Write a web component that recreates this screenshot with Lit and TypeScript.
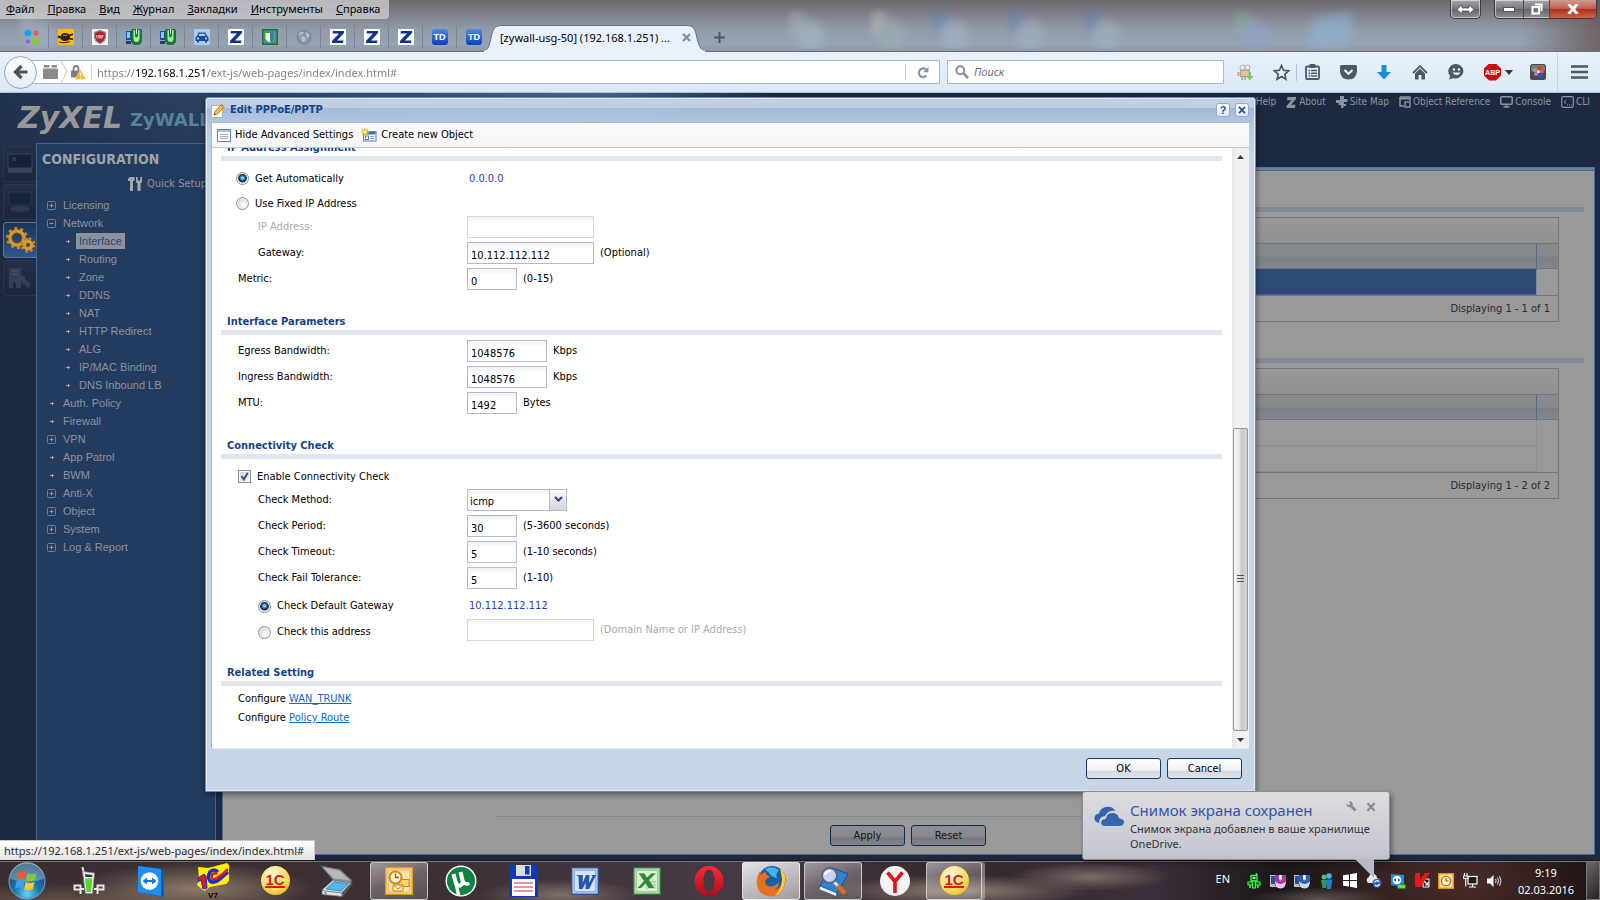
import { LitElement, html, css, svg, nothing, TemplateResult } from "lit";
import { customElement } from "lit/decorators.js";

type Pic = TemplateResult;

const pic = (w: number, h: number, vb: string, body: unknown): Pic =>
  html`<svg width=${w} height=${h} viewBox=${vb} aria-hidden="true">${body}</svg>`;

/* ---------- favicons ---------- */
const favDots = pic(16, 16, "0 0 16 16", svg`
  <circle cx="4" cy="4" r="3.6" fill="#19a5f0"/><circle cx="12" cy="4" r="2.7" fill="#f2566b"/>
  <circle cx="4" cy="12.4" r="2.2" fill="#9a5fe0"/><circle cx="11.5" cy="11.8" r="4.2" fill="#84c93c"/>`);
const favPlug = pic(16, 16, "0 0 16 16", svg`
  <rect width="16" height="16" fill="#fdb813"/><path d="M0 6.500 L3 7 Q3 4 7 4 Q10 4 11 5.500 L15 4.500 V6 L12 7 V9 L15 9.500 V11 L11 10.500 Q9 12.500 6 12 Q3 11.500 3 9.500 L0 9Z" fill="#2b2210"/>
  <path d="M1 13 Q6 14.500 12 12.500" stroke="#4a3606" stroke-width="1.2" fill="none"/><path d="M5 6.500 L9 6.500" stroke="#b98a16" stroke-width="1"/>`);
const favShield = pic(16, 16, "0 0 16 16", svg`
  <rect width="16" height="16" fill="#f6f4f4"/><path d="M8 1.500 L13.500 3.500 V8 Q13 12.500 8 14.500 Q3 12.500 2.500 8 V3.500Z" fill="#b5232c" stroke="#8d8f94" stroke-width="1.200"/>
  <path d="M4.800 6 V8.500 Q5.500 10 6.300 8.500 V6 M7.200 9.500 L8 6 L8.900 9.500 M9.800 9.500 V6.300 H11 V8 H10" stroke="#f3d9da" stroke-width=".8" fill="none"/>`);
const favMouse = pic(16, 16, "0 0 16 16", svg`
  <rect x="0" y="2" width="6" height="9" fill="#1c4fae"/><rect x="1" y="3" width="3" height="6" fill="#8fc3f5"/><rect x="0" y="12" width="5" height="3" fill="#2c3c62"/>
  <path d="M5 3 Q5 0 8 0 H13 Q16 0 16 3 V9 Q16 16 10.5 16 Q5 16 5 9Z" fill="#14802a" stroke="#0b5a1b" stroke-width=".6"/><path d="M7.500 1 V9 Q7.500 13 10.500 13 Q13.500 13 13.500 9 V1 L12 1 V7 Q10.500 10 9 7 V1Z" fill="#a4e8a8"/><path d="M10.500 0 V5" stroke="#eafbea" stroke-width="1"/>`);
const favCar = pic(16, 16, "0 0 16 16", svg`
  <rect width="16" height="16" fill="#a8cdf3"/><path d="M4.500 3.500 H11.500 L13 7 Q14.500 7.500 14.500 9 V12 H13 V13.500 H11 V12 H5 V13.500 H3 V12 H1.500 V9 Q1.500 7.500 3 7Z" fill="#1a4c96"/>
  <path d="M5.300 4.800 H10.700 L11.500 7 H4.500Z" fill="#a8cdf3"/><circle cx="4" cy="9.500" r=".9" fill="#fff"/><circle cx="12" cy="9.500" r=".9" fill="#fff"/>`);
const favZ = pic(16, 16, "0 0 16 16", svg`
  <rect width="16" height="16" fill="#fff"/><path d="M3 2 H14 V4 L7 11.500 H13.500 L13 14 H2 V12 L9 4.600 H2.500Z" fill="#14308a"/>`);
const favGreen = pic(16, 16, "0 0 16 16", svg`
  <rect x=".7" y=".7" width="14.600" height="14.600" fill="#3f9a68" stroke="#1f6b42" stroke-width="1.400"/><path d="M3.500 4 H12.500 V9 Q12 12 8 13.500 Q4 12 3.500 9Z" fill="#f4f3c8"/>
  <path d="M8 4 H12.500 V9 Q12 12 8 13.500Z" fill="#3a7fb0"/>`);
const favGlobe = pic(16, 16, "0 0 16 16", svg`
  <circle cx="8" cy="8" r="6.800" fill="#8f959f" stroke="#747c87" stroke-width="1"/><path d="M3 4 Q6 2 8 3 L7 5 L4 6 L3 8Z M6 7 L9 8 L10 10 L8 14 L6 12 L5 9Z M10 3 L13 5 L13.500 8 L11 9 L10 6Z" fill="#b9bfc8"/>`);
const favTD = html`<span class="td">TD</span>`;

/* ---------- browser toolbar ---------- */
const dark = "#4d5861";
const icBack = pic(16, 16, "0 0 16 16", svg`<path d="M8.500 2 L2.500 8 L8.500 14 M3 8 H14.500" stroke="#4a5259" stroke-width="3.200" fill="none"/>`);
const icPuzzle = pic(15, 14, "0 0 15 14", svg`<rect y="3.500" width="15" height="10.500" rx="1" fill="#8a8a8a"/><rect x="1" y="0" width="5.500" height="2.500" fill="#8a8a8a"/><rect x="8.500" y="0" width="5.500" height="2.500" fill="#8a8a8a"/>`);
const icLock = pic(15, 15, "0 0 15 15", svg`
  <path d="M2.500 6 V4 Q2.500 1 5 1 Q7.500 1 7.500 4 V6" stroke="#7d7d7d" stroke-width="1.800" fill="none"/><rect x="0" y="5.500" width="9.500" height="7" rx="1" fill="#7d7d7d"/>
  <path d="M9.500 4.500 L15 14.500 H4Z" fill="#fdb515" stroke="#fff" stroke-width=".5"/><path d="M9.500 8 V11 M9.500 12 V13.200" stroke="#fff" stroke-width="1.300"/>`);
const icReload = pic(12, 13, "0 0 12 13", svg`<path d="M9.500 9.500 A4.300 4.300 0 1 1 9 3.500" stroke="#8496a8" stroke-width="2.200" fill="none"/><path d="M11.500 .8 V6.300 H6Z" fill="#8496a8"/>`);
const icMag = pic(14, 14, "0 0 14 14", svg`<circle cx="5.300" cy="5.300" r="4" stroke="#8d8d8d" stroke-width="1.900" fill="none"/><path d="M8.200 8.200 L13 13" stroke="#8d8d8d" stroke-width="2.500"/>`);
const icRobot = pic(17, 17, "0 0 17 17", svg`
  <circle cx="5.500" cy="3.500" r="2.500" fill="#eee" stroke="#a9a9a9"/><circle cx="10.500" cy="3.500" r="2.500" fill="#eee" stroke="#a9a9a9"/><rect x="3.500" y="6.500" width="9" height="6" fill="#ecc28c" stroke="#b5a48c"/>
  <path d="M1.500 8 V12 M5 13 V16 M8 13 V16" stroke="#a9a9a9" stroke-width="1.800"/><path d="M11.500 8 V12 H9 L12.800 16.500 L16.500 12 H14 V8Z" fill="#75c86c"/>`);
const icStar = pic(17, 17, "0 0 17 17", svg`<path d="M8.500 1.600 L10.600 6.300 L15.600 6.800 L11.800 10.200 L12.900 15.200 L8.500 12.600 L4.100 15.200 L5.200 10.200 L1.400 6.800 L6.400 6.300Z" fill="none" stroke="${dark}" stroke-width="1.700"/>`);
const icList = pic(15, 16, "0 0 15 16", svg`<rect x="1" y="2.500" width="13" height="12.500" rx="1" fill="none" stroke="${dark}" stroke-width="1.800"/><rect x="4.500" y="0" width="6" height="4" rx="1" fill="${dark}"/>
  <path d="M3.500 6.500 H5 M6 6.500 H12 M3.500 9.300 H5 M6 9.300 H12 M3.500 12.100 H5 M6 12.100 H12" stroke="${dark}" stroke-width="1.500"/>`);
const icPocket = pic(17, 15, "0 0 17 15", svg`<path d="M1.500 0 H15.500 Q17 0 17 1.500 V6.500 Q16 14.500 8.500 14.500 Q1 14.500 0 6.500 V1.500 Q0 0 1.500 0Z" fill="${dark}"/><path d="M4.500 5 L8.500 8.800 L12.500 5" stroke="#eef4fb" stroke-width="2" fill="none"/>`);
const icDown = pic(14, 15, "0 0 14 15", svg`<path d="M4.500 0 H9.500 V7 H14 L7 14.500 L0 7 H4.500Z" fill="#1c8fd8"/>`);
const icHome = pic(16, 15, "0 0 16 15", svg`<path d="M1 8 L8 1.200 L15 8" stroke="${dark}" stroke-width="1.800" fill="none"/><path d="M3 8.500 L8 3.700 L13 8.500 V14.500 H9.500 V10 H6.500 V14.500 H3Z" fill="${dark}"/>`);
const icChat = pic(17, 16, "0 0 17 16", svg`<path d="M8.500 0 A8 7.300 0 1 1 5 14.200 L1.200 15.500 L2 11.800 A8 7.300 0 0 1 8.500 0Z" fill="${dark}"/><circle cx="6" cy="5.500" r="1.200" fill="#eef4fb"/><circle cx="11" cy="5.500" r="1.200" fill="#eef4fb"/><path d="M4.500 8.500 Q8.500 13.500 12.500 8.500Z" fill="#eef4fb"/>`);
const icFlower = pic(16, 16, "0 0 16 16", svg`<rect width="16" height="16" rx="2.500" fill="#4a4a4e"/><rect x="1" y="1" width="14" height="7" rx="2" fill="#77777c"/><circle cx="9.500" cy="4" r="2" fill="#e8352c"/><circle cx="5" cy="6" r="2" fill="#58d24c"/><circle cx="12" cy="7.500" r="1.900" fill="#e85c3a"/><circle cx="6" cy="10" r="2" fill="#d76be0"/><circle cx="10.500" cy="11.500" r="2.200" fill="#2c4cf0"/><circle cx="8.500" cy="7.800" r="1.500" fill="#eee"/>`);
const icMenu = pic(17, 14, "0 0 17 14", svg`<path d="M0 1.500 H17 M0 7 H17 M0 12.500 H17" stroke="${dark}" stroke-width="2.600"/>`);

/* ---------- router page ---------- */
const gl = "#8d939d";
const icPage = pic(12, 12, "0 0 12 12", svg`<rect x="1" y="1" width="10" height="10" fill="${gl}"/>`);
const icAbout = pic(11, 11, "0 0 11 11", svg`<path d="M1.500 0 H10 V2 L5 7.800 H9.500 L9 11 H0.500 V9 L5.500 3.200 H1Z" fill="${gl}"/>`);
const icSite = pic(12, 12, "0 0 12 12", svg`<path d="M4 0 H8 V3 H11.500 V6 H8 V8 H10 V10 H7.500 V12 H5 V9 H2.500 V7 H0 V4 H4Z" fill="${gl}"/>`);
const icObj = pic(12, 12, "0 0 12 12", svg`<path d="M1 1 H11 V5 M1 1 V10 H5" stroke="${gl}" stroke-width="1.500" fill="none"/><path d="M1 2.500 H11" stroke="${gl}" stroke-width="2"/><rect x="6" y="6" width="5" height="5" fill="none" stroke="${gl}" stroke-width="1.400"/>`);
const icCons = pic(13, 12, "0 0 13 12", svg`<rect x=".8" y=".8" width="11.400" height="7.400" rx="1" fill="none" stroke="${gl}" stroke-width="1.500"/><path d="M6.500 8 V11 M3.500 11 H9.500" stroke="${gl}" stroke-width="1.500"/>`);
const icCli = pic(13, 12, "0 0 13 12", svg`<rect x=".7" y=".7" width="11.600" height="10.600" rx="1.500" fill="none" stroke="${gl}" stroke-width="1.200"/><path d="M5.500 4 L3 6 L5.500 8 M6 9 H7 M8 9 H9 M10 9 H10.800" stroke="${gl}" fill="none"/>`);
const icTools = pic(14, 14, "0 0 14 14", svg`<path d="M0 3 Q0 0 3 0 H6.500 V4 H5 V14 H2 V4 H0Z" fill="#a3a9b3"/><path d="M8 0 V4 Q8 6 9.500 6.500 V14 H12.500 V6.500 Q14 6 14 4 V0 H12.300 V3.500 H9.700 V0Z" fill="#a3a9b3"/>`);
const icPlus = pic(9, 9, "0 0 9 9", svg`<rect x=".5" y=".5" width="8" height="8" rx="1" fill="none" stroke="#6f7f96"/><path d="M2.500 4.500 H6.500 M4.500 2.500 V6.500" stroke="#8b97a8"/>`);
const icMinus = pic(9, 9, "0 0 9 9", svg`<rect x=".5" y=".5" width="8" height="8" rx="1" fill="none" stroke="#6f7f96"/><path d="M2.500 4.500 H6.500" stroke="#8b97a8"/>`);
const icArrow = pic(4, 5, "0 0 4 5", svg`<path d="M0 2.500 H4 M2.500 1 V4" stroke="#98a2b0"/>`);
const icMonitor = pic(26, 24, "0 0 26 24", svg`<rect x="1" y="2" width="24" height="14" fill="#16223a" stroke="#36435b"/><rect x="1" y="16" width="24" height="5" fill="#36435b"/><path d="M5 5 H9 V9 H5Z" fill="#2c3951"/>`);
const icScreen = pic(26, 24, "0 0 26 24", svg`<rect x="2" y="2" width="22" height="13" rx="2" fill="#18243b" stroke="#2a374f"/><ellipse cx="13" cy="19" rx="10" ry="3" fill="#2d3a52"/>`);
const cog = (cx: number, cy: number, r: number, n: number) => svg`
  <circle cx=${cx} cy=${cy} r=${r} fill="none" stroke="#c8871b" stroke-width="3" stroke-dasharray="${(Math.PI * r) / n} ${(Math.PI * r) / n}"/>
  <circle cx=${cx} cy=${cy} r=${r - 2.5} fill="none" stroke="#d39a2e" stroke-width="3.500"/><circle cx=${cx} cy=${cy} r=${r - 4.6} fill="none" stroke="#7d5210" stroke-width=".8"/>`;
const icCogs = pic(30, 26, "0 0 30 26", svg`${cog(12, 11, 9.5, 10)}${cog(23, 18, 6.2, 8)}`);
const icMaint = pic(26, 24, "0 0 26 24", svg`<path d="M2 2 H14 V10 H18 V13 L24 18 L21 22 L14 16 V22 H9 V16 H6 V22 H2Z" fill="#323f57"/><path d="M5 5 H11 M5 8 H11" stroke="#4b586e"/>`);

/* ---------- dialog ---------- */
const icEdit = pic(14, 15, "0 0 14 15", svg`<rect x=".5" y="2.500" width="11" height="12" fill="#fbfbfb" stroke="#b9b3a8"/><path d="M3 12 L4 8.500 L10.500 1.500 L13.200 4 L6.500 10.800Z" fill="#f6c344" stroke="#a86d14" stroke-width=".9"/><path d="M10.500 1.500 L13.200 4 L12.200 5 L9.500 2.500Z" fill="#e88a84"/><path d="M3 12 L3.500 10.500 L4.600 11.500Z" fill="#222"/>`);
const icForm = pic(14, 13, "0 0 14 13", svg`<rect x=".5" y=".5" width="13" height="12" fill="#fff" stroke="#5b7fc0"/><rect x="1" y="1" width="12" height="2" fill="#a9c1e8"/><path d="M3 5.500 H11 M3 7.500 H11 M3 9.500 H11" stroke="#a3abb8"/>`);
const icNew = pic(16, 14, "0 0 16 14", svg`<rect x="2.500" y="3.500" width="12.500" height="9.500" fill="#fff" stroke="#5b7fc0"/><rect x="3" y="4" width="11.500" height="2.500" fill="#3f6fc4"/><rect x="4.500" y="8" width="3" height="3.500" fill="none" stroke="#5b7fc0"/><path d="M9 8.500 H13.500 M9 10.500 H13.500" stroke="#8aa0c8"/><path d="M4 0 V8 M0 4 H8 M1 1 L7 7 M7 1 L1 7" stroke="#e3c52f" stroke-width="1.300"/><circle cx="4" cy="4" r="1.500" fill="#fff8b0"/>`);
const icX = pic(8, 8, "0 0 8 8", svg`<path d="M1 .8 L7 7.200 M7 .8 L1 7.200" stroke="#1f4f9c" stroke-width="1.700"/>`);
const icChevron = pic(9, 6, "0 0 9 6", svg`<path d="M1 1 L4.500 4.500 L8 1" stroke="#2b4e87" stroke-width="2.200" fill="none"/>`);
const icUp = pic(7, 4, "0 0 7 4", svg`<path d="M3.500 0 L7 4 H0Z" fill="#3c3c3c"/>`);
const icDn = pic(7, 4, "0 0 7 4", svg`<path d="M0 0 H7 L3.500 4Z" fill="#3c3c3c"/>`);
const icGrip = pic(7, 8, "0 0 7 8", svg`<path d="M0 .5 H7 M0 3.500 H7 M0 6.500 H7" stroke="#555"/>`);

/* ---------- taskbar ---------- */
const tbStart = pic(38, 38, "0 0 38 38", svg`
  <defs><radialGradient id="orb" cx="50%" cy="85%" r="85%"><stop offset="0" stop-color="#5cd6f6"/><stop offset=".4" stop-color="#1c78ac"/><stop offset="1" stop-color="#16395c"/></radialGradient></defs>
  <circle cx="19" cy="19" r="18" fill="url(#orb)" stroke="#7fa9c4" stroke-width="1"/><path d="M2 17 A17 17 0 0 1 36 17 Q19 23 2 17Z" fill="#cfe4f2" opacity=".35"/>
  <path d="M10 11 Q14 8 18 10.500 L16.500 17.500 Q13 15.500 8.800 17.800Z" fill="#ee5a2b"/><path d="M19.500 11.200 Q24 13.500 28.500 11 L27 18 Q22.500 20.500 18 18.200Z" fill="#8ac43f"/>
  <path d="M8.400 19.500 Q12.500 17.200 16.200 19.300 L14.700 26.500 Q11 24.500 7 26.800Z" fill="#3ba0e6"/><path d="M17.600 20 Q22 22.300 26.600 19.800 L25 27 Q20.500 29.500 16.200 27.200Z" fill="#fcc62c"/>`);
const tbPhone = pic(32, 28, "0 0 32 28", svg`<path d="M9.500 0 L11 7" stroke="#e6e6e6" stroke-width="2"/><path d="M9.500 4.500 L21.500 6 L19.500 26.500 L12.500 26.500Z" fill="#f2f2f2" stroke="#8c8c8c" stroke-width=".8"/><path d="M12 7 L19.500 8 L19 10 H12.300Z" fill="#3a3a3a"/><path d="M12 11.500 H19.300 L18 25 H13.500Z" fill="#5cd62c"/>
  <path d="M7.500 27 V18.500 H1.500 V22.500 H7 M24.500 27 V18.500 H30.500 V22.500 H25 M8 22 H11 M21 22 H24" stroke="#e6e6e6" stroke-width="2" fill="none"/>`);
const tbTeam = pic(28, 32, "0 0 28 32", svg`<path d="M1 1 L24 4 L27 7 V31 L24 32 L1 27Z" fill="#0a5cc0"/><path d="M1 1 L24 4 V31 L1 27Z" fill="#1c8ff2"/><circle cx="12.500" cy="16" r="8.800" fill="#fff"/><path d="M5.500 16 L10 12.500 V15 H15 V12.500 L19.500 16 L15 19.500 V17 H10 V19.500Z" fill="#1478dc"/>`);
const tbOld1c = html`<span class="old1c"><svg width="34" height="30" viewBox="0 0 34 30"><path d="M2 4 L12 5 L31 0 L33 2 V18 L30 21 L14 24 L8 28 L1 22 L3 16Z" fill="#fff200"/><path d="M2 15 L8 11 L10 13 L11 25 L7 26 L5 17 L2 19Z" fill="#e01818" stroke="#1c2ed0"/><path d="M22 9 Q18 5 14 9 Q11 14 14 18 Q18 21 24 16 L32 9" fill="none" stroke="#1c2ed0" stroke-width="3.500"/><path d="M21 11 Q18 9 16 12 Q15 17 19 16 Q24 14 32 6" fill="none" stroke="#e01818" stroke-width="2.500"/></svg><small>V7</small></span>`;
const tb1c = html`<span class="one-c"><b>1С</b></span>`;
const tbScan = pic(32, 32, "0 0 32 32", svg`<path d="M31 15 L31.500 19 L22 31.500 L20 27 L28 17Z" fill="#54585c"/><path d="M0 1 L19 4.500 L31 15.500 L27 19 L12 15Z" fill="#8d9195" stroke="#5d6165"/><path d="M2 2.200 L18.500 5.500 L28 15 L13 13.500Z" fill="#b4b8bc"/><path d="M1 25 L12 15 L30 18 L21 27.500 V31.500 L1 29.500Z" fill="#dfe1e3" stroke="#6b6f73" stroke-width=".8"/><path d="M5 24 L13 16.500 L27.500 18.800 L20 26Z" fill="#4cb8f4" stroke="#1f5c86" stroke-width=".6"/><path d="M1 25.500 L21 28" stroke="#7d8185"/><circle cx="4.500" cy="28" r="1.100" fill="#2fbf2c"/>`);
const tbOutlook = pic(28, 28, "0 0 28 28", svg`<rect x=".8" y=".8" width="26.400" height="26.400" fill="#fff3d3" stroke="#e39b1c" stroke-width="1.600"/><rect x="3" y="3" width="22" height="22" fill="#fce7b2" stroke="#eba72c"/><rect x="14" y="12.500" width="10" height="7" fill="#f9d47c" stroke="#c98412"/><path d="M8 18 H18 V24 H8Z" fill="#fff0c2" stroke="#c98412"/><path d="M8 18 L13 22 L18 18" stroke="#c98412" fill="none"/><circle cx="10.500" cy="10.500" r="6" fill="#fff6dc" stroke="#d28a14" stroke-width="2"/><path d="M10.500 6.500 V10.500 H14" stroke="#8c5b06" stroke-width="1.300" fill="none"/>`);
const tbMu = pic(32, 32, "0 0 32 32", svg`<circle cx="16" cy="16" r="15.500" fill="#fff"/><circle cx="16" cy="16" r="14" fill="#0f8442"/><path d="M8.500 9 L10.800 18 Q12 21.500 15 20.500 Q18.500 19 17.500 15.500 L15.500 7" stroke="#fff" stroke-width="4" fill="none"/><path d="M17.500 15.500 Q19.500 20.500 24.500 18.500 M10.500 16 L13.500 30" stroke="#fff" stroke-width="3.400" fill="none"/>`);
const tbFloppy = pic(30, 32, "0 0 30 32", svg`<path d="M1 0 H28 L30 3 V32 H1Z" fill="#1238b8"/><rect x="8" y="0" width="15" height="11" fill="#d9dde4"/><rect x="17" y="1" width="4.500" height="8.500" fill="#1238b8"/><rect x="4" y="14" width="23" height="17" fill="#fff"/><path d="M6 18 H25 M6 22 H25 M6 26 H25" stroke="#d02c38" stroke-width="1.200"/>`);
const tbWord = pic(28, 28, "0 0 28 28", svg`<rect x=".8" y=".8" width="26.400" height="26.400" fill="#fff" stroke="#2a5699" stroke-width="1.600"/><rect x="3" y="3" width="22" height="22" fill="#d3e2f6" stroke="#5d86c4"/><path d="M5 8 H12 L11.500 16 L15 8 H18.500 L18 16 L21.500 9.500 L20.500 8 H25 L18 22 H14.500 L14.800 15.500 L11.500 22 H8 L7.500 9.500Z" fill="#2458a8"/>`);
const tbExcel = pic(28, 28, "0 0 28 28", svg`<rect x=".8" y=".8" width="26.400" height="26.400" fill="#fff" stroke="#2d7d32" stroke-width="1.600"/><rect x="3" y="3" width="22" height="22" fill="#dcefd5" stroke="#6cae5c"/><path d="M13 18 H23 M13 21 H23 M16 15 H23" stroke="#86b87c"/><path d="M5 6 H11.500 L14 10 L18.500 6 H23.500 L16.500 13 L22 21.500 H15.500 L12.500 16.800 L8 21.500 H3.800 L10.500 14Z" fill="#2b8a34" stroke="#fff" stroke-width=".6"/>`);
const tbOpera = pic(30, 32, "0 0 30 32", svg`<defs><linearGradient id="op" x2="0" y2="1"><stop stop-color="#ff2a36"/><stop offset="1" stop-color="#b00a1e"/></linearGradient></defs><path fill-rule="evenodd" fill="url(#op)" d="M15 1 A14.500 15 0 1 1 15 31 A14.500 15 0 1 1 15 1 M15 4.500 C11 4.500 9.500 10 9.500 16 C9.500 22 11 27.500 15 27.500 C19 27.500 20.500 22 20.500 16 C20.500 10 19 4.500 15 4.500Z"/>`);
const tbFox = pic(32, 32, "0 0 32 32", svg`<circle cx="17" cy="14.500" r="13.500" fill="#1a5fa4"/><path d="M10 4 Q18 0 24 5 Q20 9 22 13 Q16 12 14 8Z" fill="#45b3e8"/><path d="M25 3 Q32 10 29.500 19 Q27 31 15.500 31.500 Q4 31 2 20 Q1 12 5 6 L6 10 Q8 7 10.500 7 Q11 10 15 11.500 L10.500 15 Q9 21 15.500 21.500 Q21 21 24 17 Q24 23 19 25 Q26 24 27 16 Q27.500 9 25 3Z" fill="#e8701c"/><path d="M25 3 Q32 10 29.500 19 Q27.500 28 20 30.500 Q28 22 27 13Z" fill="#fbcf3a"/>`);
const tbSearch = pic(32, 32, "0 0 32 32", svg`<path d="M13 2 L31 9 L20 28 L3 21Z" fill="#2f83cf" stroke="#174f8e"/><path d="M3 21 L20 28 L19 31.500 L2 24.500Z" fill="#e9eef4" stroke="#174f8e" stroke-width=".7"/><path d="M17 17 L21 21" stroke="#e8e8ee" stroke-width="3"/><path d="M20.500 20.500 L28 28.500" stroke="#e2682f" stroke-width="4.500"/><circle cx="12.500" cy="10.500" r="7.500" fill="#c9d0f2" stroke="#5d6784" stroke-width="2"/><path d="M8 10 Q9 5.500 14 6" stroke="#fff" stroke-width="2" fill="none"/>`);
const tbYandex = pic(32, 32, "0 0 32 32", svg`<circle cx="16" cy="16" r="15" fill="#f4f4f4"/><path d="M8.500 7.500 L16 16.500 L23.500 7.500 M16 16 V28" stroke="#e0131a" stroke-width="3.600" fill="none"/>`);

const trMouse = (c: string, hi: string) => pic(16, 16, "0 0 16 16", svg`<rect x=".5" y="2.500" width="6" height="11" fill="#2a4f9e" stroke="#b9c6dc"/><rect x="1" y="11" width="4" height="3" fill="#e0b08c"/><path d="M5 2 H16 V8 Q16 15.500 10.500 15.500 Q5 15.500 5 8Z" fill="${hi}"/><path d="M5 2 H9 V6 Q10.500 9 12 6 V2 H16 V8 Q15 10 10.500 11 Q6 10 5 8Z" fill="${c}"/><path d="M10.500 2 V6" stroke="#fff" stroke-width="1.400"/>`);
const trIcons: Pic[] = [
  pic(14, 16, "0 0 14 16", svg`<path d="M9.500 0 V3" stroke="#3df04a" stroke-width="1.500"/><path d="M4 2.500 H10 V8 H4Z" fill="#0d4a14" stroke="#3df04a" stroke-width="1.300"/><path d="M1 9 H5.500 V12 H1Z M8.500 9 H13 V12 H8.500Z M5.500 8 H8.500 V15 H5.500Z" fill="#0b4d14" stroke="#3df04a" stroke-width="1.200"/><path d="M3 12 V15 M11 12 V15" stroke="#3df04a" stroke-width="1.500"/><path d="M5.500 5 H8.500" stroke="#dfffe0" stroke-width="1.500"/>`),
  trMouse("#a13c9c", "#efc4ee"),
  trMouse("#2b62a8", "#c4dcf4"),
  pic(13, 16, "0 0 13 16", svg`<circle cx="4" cy="4" r="2.500" fill="#56c06c"/><path d="M1 7 H7 L6 15 H2.500Z" fill="#2f9a4c"/><circle cx="9" cy="3" r="2.800" fill="#4fb3e8"/><path d="M5.500 6.500 H12.500 L11 16 H7Z" fill="#1f7fc4"/>`),
  pic(14, 15, "0 0 14 15", svg`<path d="M0 2.200 L6 1.400 V7 H0Z M7 1.200 L14 0 V7 H7Z M0 8 H6 V13.500 L0 12.700Z M7 8 H14 V15 L7 13.800Z" fill="#fff"/>`),
  pic(16, 15, "0 0 16 15", svg`<path d="M2 10 Q-1 6 3 4 Q4 0 8 1 Q11 2 11 5 Q15 6 14 10Z" fill="#e8e8ea"/><circle cx="11" cy="10.300" r="4.500" fill="#2c62b8"/><path d="M8.500 9.500 A2.600 2.600 0 0 1 13 8.700 M13.500 11 A2.600 2.600 0 0 1 9 12" stroke="#fff" stroke-width="1.200" fill="none"/>`),
  pic(16, 16, "0 0 16 16", svg`<path d="M1 1 L14 2 V14 L1 12Z" fill="#1c8ff2"/><circle cx="7" cy="7" r="4.300" fill="#fff"/><path d="M3.500 7 L6 5 V9Z M10.500 7 L8 5 V9Z" fill="#1478dc"/><rect x="7.500" y="11.500" width="8" height="4" rx="1" fill="#6bdc3c" stroke="#2c7a12" stroke-width=".6"/>`),
  pic(15, 15, "0 0 15 15", svg`<path d="M8 6 H14 V14 H8Z" fill="#111" stroke="#fff"/><path d="M9 8 L13 12 M13 9 V12 H10" stroke="#fff" stroke-width="1.200" fill="none"/><path d="M0 0 H5 V6 L10 0 H15 L5 14 H0Z" fill="#f01418"/>`),
  pic(16, 16, "0 0 16 16", svg`<rect x=".7" y=".7" width="14.600" height="14.600" fill="#fbdf9c" stroke="#e09412" stroke-width="1.400"/><circle cx="8" cy="8" r="4.600" fill="#fff4d6" stroke="#b87708" stroke-width="1.400"/><path d="M8 5 V8 H10.500" stroke="#7a4f04" fill="none"/>`),
  pic(15, 15, "0 0 15 15", svg`<rect x="5" y="3.500" width="9" height="7.500" fill="#1f1a1c" stroke="#fff" stroke-width="1.200"/><path d="M9.500 11 V14 M6 14 H13 M1.500 0 V3 M4 0 V3 M.5 3 H5 V5.500 H.5Z M2.700 6 V13.500" stroke="#fff" stroke-width="1.100" fill="none"/>`),
  pic(15, 14, "0 0 15 14", svg`<path d="M0 4.500 H3 L6.500 1 V13 L3 9.500 H0Z" fill="#fff"/><path d="M8.500 5 Q9.700 7 8.500 9 M10.500 3.500 Q12.500 7 10.500 10.500 M12.500 2 Q15.500 7 12.500 12" stroke="#e4e4e4" fill="none"/>`),
];
const icCloud = pic(31, 21, "0 0 31 21", svg`<path d="M5 17 Q0 16 .5 11.500 Q1 8 5 7.500 Q6 2 12 1 Q18 -.5 21.500 5 Q14 4 11 10 Q5 10.500 5 17Z" fill="#3563ad"/><path d="M10 20.500 Q6.500 20 6.500 16.500 Q7 12.500 11.500 12.500 Q12.500 6.500 18.500 6.500 Q24 6.500 25.500 12 Q30.500 12.500 30.500 16.500 Q30 20.500 26 20.500Z" fill="#3563ad" stroke="#d8d9dd" stroke-width="1"/>`);
const icWrench = pic(11, 11, "0 0 11 11", svg`<path d="M4 4 L9.500 9.500" stroke="#8b8c91" stroke-width="3"/><path d="M.5 2.500 L2.300 4 L4 3.600 L4 2 L2.500 .5 Q5 -.3 6.300 1.500 Q7.200 3.500 6 5 Q4 7 2 5.800 Q0 4.500 .5 2.500Z" fill="#8b8c91"/>`);
const icXg = pic(10, 10, "0 0 10 10", svg`<path d="M1.500 1.200 L8.500 8.800 M8.500 1.200 L1.500 8.800" stroke="#8b8c91" stroke-width="2.200"/>`);

const shared = css`
  *, *::before, *::after { box-sizing: border-box; }
  svg { display: block; flex: none; }
  button { font: inherit; color: inherit; padding: 0; border: 0; background: none; }
  input, select { font: inherit; color: inherit; margin: 0; }
  a { color: inherit; text-decoration: none; }
`;

@customElement("browser-chrome")
class BrowserChrome extends LitElement {
  static styles = [shared, css`
    :host { display: block; font: 11px/16px "Noto Sans", "Open Sans", sans-serif; color: #000; }
    .glass { height: 52px; position: relative; border-bottom: 1px solid #68707e; display: flex; flex-direction: column;
      background: linear-gradient(90deg, rgba(98,80,80,0) 95%, rgba(98,80,80,.75) 100%),
        linear-gradient(180deg, #6c686e 0, #7b7c85 12px, #929dab 30px, #96a3b2 44px, #8f98a6 52px); }
    .blur { position: absolute; inset: 8px 0 2px 0; overflow: hidden; }
    .menu { position: relative; display: flex; gap: 13px; width: max-content; height: 19px; padding: 0 9px 0 6px; align-items: center;
      background: rgba(212,213,217,.72); border-radius: 0 0 4px 0; }
    .menu u { text-decoration: underline; }
    .wins { position: absolute; right: 3px; top: 0; display: flex; gap: 13px; z-index: 1; }
    .grp { display: flex; border: 1px solid #3b3c42; border-top: 0; border-radius: 0 0 5px 5px; box-shadow: inset 0 0 0 1px rgba(255,255,255,.5); overflow: hidden;
      background: linear-gradient(#a8a6aa, #78777c 50%, #66656a 51%, #8f8e93); }
    .grp button { width: 29px; height: 18px; display: grid; place-items: center; border-right: 1px solid #4b4c52; }
    .grp button:last-child { border-right: 0; }
    .grp button.r { width: 26px; }
    .grp button.x { width: 46px; background: linear-gradient(#d09a90, #c0594a 50%, #a92f1d 51%, #d5604a); }
    .tabs { position: relative; display: flex; height: 27px; margin-top: 6px; padding-left: 15px; }
    .tab { width: 34px; height: 24px; display: grid; place-items: center; border-right: 1px solid #7c8594; }
    .tab.last { border-right: 0; }
    .td { width: 16px; height: 16px; border-radius: 3px; background: linear-gradient(#4c8ae8, #0f3fb8); color: #fff; font: bold 9px/16px "Liberation Sans", sans-serif; text-align: center; }
    .cur { position: relative; width: 210px; height: 26px; display: flex; align-items: center; padding: 0 10px 0 9px; }
    .cur .shape { position: absolute; left: -11px; top: 0; }
    .cur span { position: relative; white-space: nowrap; flex: 1; text-align: left; }
    .cur button { position: relative; }
    .plus { margin-left: 13px; height: 26px; }
    .nav { height: 41px; display: flex; align-items: center; padding: 0 3px 0 4px; border-bottom: 1px solid #a9c4e0;
      background: linear-gradient(#e9f2fc, #dae8f6); }
    .back { width: 33px; height: 33px; border-radius: 50%; border: 1px solid #8fa5bf; background: linear-gradient(#fff, #e4edf7); display: grid; place-items: center; position: relative; z-index: 1; }
    .url { flex: 1; height: 24px; margin-left: -7px; border: 1px solid #a6bbd2; background: #fff; display: flex; align-items: center; padding-left: 12px; }
    .url .chev { margin: 0 3px 0 2px; }
    .url .sep { width: 1px; height: 16px; background: #cdd0d4; margin: 0 5px; }
    .addr { flex: 1; border: 0; outline: 0; padding: 0; height: 20px;
      color: transparent; background: linear-gradient(90deg, #7d7d7d 38px, #000 38px, #000 110px, #7d7d7d 110px); -webkit-background-clip: text; background-clip: text; }
    .rel { width: 34px; height: 16px; border-left: 1px solid #cdd0d4; display: grid; place-items: center; }
    .search { width: 277px; height: 24px; margin-left: 7px; border: 1px solid #a6bbd2; background: #fff; display: flex; align-items: center; gap: 5px; padding-left: 7px; }
    .search input { flex: 1; min-width: 0; border: 0; outline: 0; padding: 0; font-style: italic; }
    .search input::placeholder { color: #6d6d6d; opacity: 1; }
    .acts { display: flex; align-items: center; margin-left: 3px; }
    .acts button { width: 36px; height: 24px; display: grid; place-items: center; }
    .acts .s { width: 1px; height: 17px; background: #b5c5d6; margin: 0 -3px 0 -3px; }
    .acts .tall { width: 1px; height: 38px; background: #c5d4e4; margin: 0 3px 0 1px; }
    .acts .abp { display: flex; align-items: center; gap: 4px; width: 46px; padding-left: 10px; }
    .abp b { width: 17px; height: 17px; background: #c70d0d; clip-path: polygon(30% 0, 70% 0, 100% 30%, 100% 70%, 70% 100%, 30% 100%, 0 70%, 0 30%); color: #fff; font: bold 7px/17px "Liberation Sans", sans-serif; text-align: center; }
  `];
  render() {
    const menu = ["Файл", "Правка", "Вид", "Журнал", "Закладки", "Инструменты", "Справка"];
    const favs = [favDots, favPlug, favShield, favMouse, favMouse, favCar, favZ, favGreen, favGlobe, favZ, favZ, favZ, favTD, favTD];
    const ghost = (x: number, a: string, b: string) => svg`<g filter="url(#bl)" opacity=".5"><rect x=${x} y="4" width="14" height="22" fill=${a}/><ellipse cx=${x + 20} cy="28" rx="14" ry="16" fill=${b}/></g>`;
    return html`
      <div class="glass">
        <div class="blur"><svg width="100%" height="42"><defs><filter id="bl"><feGaussianBlur stdDeviation="4"/></filter></defs>
          ${ghost(20, "#aab4c8", "#a4b3cb")}${ghost(790, "#a4b6c4", "#a8bccb")}${ghost(872, "#c3cbb8", "#9fb0b4")}${ghost(934, "#6280bf", "#a7b8c8")}${ghost(1010, "#6280bf", "#a5b5c2")}${ghost(1086, "#6280bf", "#a5b5c2")}${ghost(1236, "#8bb59a", "#91a5cd")}
          <path d="M1312 10 L1352 4 V36 L1308 42Z" fill="#8fb4d4" opacity=".6" filter="url(#bl)"/></svg></div>
        <div class="wins">
          <div class="grp"><button aria-label="Переместить">${pic(17, 9, "0 0 17 9", svg`<path d="M0 4.500 L5 0 V3 H12 V0 L17 4.500 L12 9 V6 H5 V9Z" fill="#fff" stroke="#444" stroke-width=".7"/>`)}</button></div>
          <div class="grp">
            <button aria-label="Свернуть">${pic(12, 5, "0 0 12 5", svg`<rect x=".5" y=".5" width="11" height="4" fill="#fff" stroke="#555"/>`)}</button>
            <button class="r" aria-label="Восстановить">${pic(12, 12, "0 0 12 12", svg`<path d="M4 1.500 H10.500 V8" stroke="#fff" stroke-width="2" fill="none"/><rect x="1.500" y="4" width="6.500" height="6.500" fill="none" stroke="#fff" stroke-width="2.200"/>`)}</button>
            <button class="x" aria-label="Закрыть">${pic(12, 10, "0 0 12 10", svg`<path d="M1.500 0 L10.500 10 M10.500 0 L1.500 10" stroke="#fff" stroke-width="3"/>`)}</button>
          </div>
        </div>
        <nav class="menu">${menu.map(m => html`<a><u>${m[0]}</u>${m.slice(1)}</a>`)}</nav>
        <div class="tabs">
          ${favs.map((f, i) => html`<button class="tab ${i === favs.length - 1 ? "last" : ""}" aria-label="Вкладка ${i + 1}">${f}</button>`)}
          <div class="cur">
            <svg class="shape" width="236" height="27" viewBox="0 0 236 27"><path d="M0 26.500 C8 26.500 9 22 11 13 C13 4 14 .5 22 .5 H206 C214 .5 215 4 217 13 C219 22 221 26.500 229 26.500" fill="#e9f2fc" stroke="#68707e"/><path d="M4 26.500 H225" stroke="#e9f2fc" stroke-width="2"/></svg>
            <span>[zywall-usg-50] (192.168.1.251) ...</span>
            <button aria-label="Закрыть вкладку">${pic(9, 9, "0 0 9 9", svg`<path d="M1 1 L8 8 M8 1 L1 8" stroke="#84909c" stroke-width="2.200"/>`)}</button>
          </div>
          <button class="plus" aria-label="Новая вкладка">${pic(11, 11, "0 0 11 11", svg`<path d="M5.500 0 V11 M0 5.500 H11" stroke="#4d5861" stroke-width="2"/>`)}</button>
        </div>
      </div>
      <div class="nav">
        <button class="back" aria-label="Назад">${icBack}</button>
        <div class="url">${icPuzzle}<svg class="chev" width="8" height="22" viewBox="0 0 8 22"><path d="M1 0 L7 11 L1 22" fill="none" stroke="#c4c8cc"/></svg>${icLock}<i class="sep"></i>
          <input class="addr" aria-label="Адрес" value="https://192.168.1.251/ext-js/web-pages/index/index.html#" />
          <button class="rel" aria-label="Обновить">${icReload}</button></div>
        <div class="search">${icMag}<input aria-label="Поиск" placeholder="Поиск" /></div>
        <div class="acts">
          <button aria-label="Помощник">${icRobot}</button><button aria-label="В закладки">${icStar}</button><i class="s"></i>
          <button aria-label="Список">${icList}</button><button aria-label="Pocket">${icPocket}</button><button aria-label="Загрузки">${icDown}</button>
          <button aria-label="Домой">${icHome}</button><button aria-label="Чат">${icChat}</button>
          <button class="abp" aria-label="Adblock"><b>ABP</b>${pic(8, 5, "0 0 8 5", svg`<path d="M0 0 H8 L4 5Z" fill="#333"/>`)}</button>
          <button aria-label="Дополнение">${icFlower}</button><i class="tall"></i><button aria-label="Меню">${icMenu}</button>
        </div>
      </div>`;
  }
}

@customElement("router-page")
class RouterPage extends LitElement {
  static styles = [shared, css`
    :host { display: flex; flex-direction: column; height: 100%; background: linear-gradient(90deg, rgba(29,41,65,0) 20%, #1d2941 46%), linear-gradient(#2c4260, #22314d 40px, #1d2941 90px);
      font: 11px/14px Tahoma, "DejaVu Sans Condensed", "DejaVu Sans", sans-serif; color: #8d939d; }
    .head { display: flex; height: 50px; padding: 0 10px 0 18px; align-items: flex-start;
      background: linear-gradient(rgba(29,41,65,0), rgba(29,41,65,.3)), linear-gradient(90deg, #22324e 0, #31496a 300px, #4b6785 600px, #1d2941 780px); }
    .logo { font: italic bold 30px/50px "DejaVu Sans", sans-serif; color: #989898; width: 112px; }
    .prod { font: bold 18px/54px "DejaVu Sans", sans-serif; color: #55839a; flex: 1; }
    .links { display: flex; align-items: center; height: 18px; font-size: 10px; }
    .links a { display: flex; align-items: center; gap: 2px; margin-left: 10px; white-space: nowrap; }
    .who { margin-right: 14px; }
    .body { flex: 1; display: flex; min-height: 0; padding: 0 5px 5px 0; }
    .rail { width: 36px; padding: 3px 0 0 3px; display: flex; flex-direction: column; gap: 2px; }
    .rail button { height: 36px; width: 33px; display: grid; place-items: center; border-radius: 4px 0 0 4px; background: linear-gradient(#242f47, #1c273d); border: 1px solid #2a364f; border-right: 0; }
    .rail button.on { background: linear-gradient(#1c3358, #2f568c); border-color: #5b7797; }
    .side { width: 180px; background: #243b60; border: 1px solid #46628a; padding: 7px 0 0 5px; }
    .side h1 { margin: 0; font: bold 14px/16px Tahoma, "DejaVu Sans Condensed", "DejaVu Sans", sans-serif; color: #9fa3aa; }
    .quick { display: flex; align-items: center; gap: 5px; padding: 5px 0 0 86px; height: 29px; white-space: nowrap; }
    .tree { list-style: none; margin: 0; padding: 0 0 0 5px; font: 11px/18px "Liberation Sans", Arial, sans-serif; }
    .tree li { display: flex; align-items: center; height: 18px; }
    .tree li i { width: 16px; display: grid; place-items: center start; }
    .tree li.leaf i { padding-left: 3px; }
    .tree li.sub { padding-left: 16px; }
    .tree a { white-space: nowrap; }
    .tree a.on { background: #8c929c; color: #2a4472; line-height: 16px; padding: 0 3px; margin-left: -3px; }
    .main { flex: 1; margin: 24px 0 0 6px; background: #999; border: 1px solid #4e6b90; border-top: 0; display: flex; flex-direction: column; min-width: 0; }
    .band { height: 4px; background: #6b8197; border-top: 1px solid #56749a; border-bottom: 1px solid #47669a; }
    .bar { height: 5px; background: #84888f; margin: 36px 10px 5px 10px; }
    .grid { margin: 0 35px 0 20px; border: 1px solid #77756f; }
    .grid .tb { height: 25px; background: linear-gradient(#989898, #909090); }
    .grid table { width: 100%; border-collapse: collapse; table-layout: fixed; }
    .grid th { height: 25px; padding: 0; background: linear-gradient(#868a8f 50%, #7b7e84 50%, #83868b); border: 1px solid #6d757f; border-width: 1px 0; }
    .grid th + th { width: 22px; border-left: 1px solid #56697d; }
    .grid td { padding: 0; height: 26px; border: 1px solid #8e8e90; border-left: 0; border-top: 0; }
    .grid td + td { border: 0; }
    .grid tr.sel td:first-child { background: #2f4a79; border: 1px dotted #5a77a8; }
    .grid .ft { height: 26px; border-top: 1px solid #77756f; text-align: right; padding: 6px 8px; color: #2a2a2a; }
    .bottom { margin: auto 275px 0 274px; border-top: 1px dotted #777; display: flex; gap: 6px; justify-content: center; padding: 8px 0; }
    .bottom button { width: 75px; height: 21px; border: 1px solid #0c2b4d; border-radius: 3px; background: linear-gradient(#8e8f92, #85878b 60%, #77787d 62%, #85868a); color: #111; }
  `];
  render() {
    const p = icPlus, m = icMinus, a = icArrow;
    const rows: [string, Pic, boolean][] = [["Licensing", p, false], ["Network", m, false], ["Interface", a, true], ["Routing", a, true], ["Zone", a, true], ["DDNS", a, true], ["NAT", a, true], ["HTTP Redirect", a, true], ["ALG", a, true], ["IP/MAC Binding", a, true], ["DNS Inbound LB", a, true], ["Auth. Policy", a, false], ["Firewall", a, false], ["VPN", p, false], ["App Patrol", a, false], ["BWM", a, false], ["Anti-X", p, false], ["Object", p, false], ["System", p, false], ["Log & Report", p, false]];
    const grid = (n: number, sel: boolean) => html`
      <div class="bar"></div>
      <div class="grid"><div class="tb"></div>
        <table><thead><tr><th></th><th></th></tr></thead><tbody>${Array.from({ length: n }, () => html`<tr class=${sel ? "sel" : ""}><td></td><td></td></tr>`)}</tbody></table>
        <div class="ft">Displaying 1 - ${n} of ${n}</div></div>`;
    return html`
      <div class="head"><div class="logo">ZyXEL</div><div class="prod">ZyWALL USG 50</div>
        <nav class="links"><span class="who">Welcome admin | <u>Logout</u></span><a>${icPage} Help</a><a>${icAbout} About</a><a>${icSite} Site Map</a><a>${icObj}Object Reference</a><a>${icCons} Console</a><a>${icCli} CLI</a></nav></div>
      <div class="body">
        <div class="rail"><button aria-label="Dashboard">${icMonitor}</button><button aria-label="Monitor">${icScreen}</button><button class="on" aria-label="Configuration">${icCogs}</button><button aria-label="Maintenance">${icMaint}</button></div>
        <aside class="side"><h1>CONFIGURATION</h1><a class="quick">${icTools} Quick Setup</a>
          <ul class="tree">${rows.map(([t, ic, sub]) => html`<li class="${sub ? "sub" : ""} ${ic === a ? "leaf" : ""}"><i>${ic}</i><a class=${t === "Interface" ? "on" : ""}>${t}</a></li>`)}</ul></aside>
        <main class="main"><div class="band"></div>${grid(1, true)}${grid(2, false)}
          <div class="bottom"><button>Apply</button><button>Reset</button></div></main>
      </div>`;
  }
}

@customElement("edit-dialog")
class EditDialog extends LitElement {
  static styles = [shared, css`
    :host { display: flex; flex-direction: column; border: 1px solid #6d8fc0; box-shadow: inset 0 0 0 1px rgba(238,244,251,.7), 0 2px 6px rgba(0,0,0,.5); padding: 0 6px 0 5px;
      border-radius: 3px 3px 0 0; background: linear-gradient(rgba(197,212,232,.96) 10px, rgba(166,193,222,.96) 10px, rgba(188,205,228,.96) 26px, #c6d6e7 60px);
      font: 11px/14px Tahoma, "DejaVu Sans Condensed", "DejaVu Sans", sans-serif; color: #000; }
    .title { height: 24px; display: flex; align-items: center; gap: 5px; }
    .title h2 { flex: 1; margin: 0; font: inherit; font-weight: bold; color: #15428b; }
    .title button { width: 14px; height: 14px; border-radius: 3px; background: linear-gradient(#fff, #dce8f6); border: 1px solid #8eabd4; display: grid; place-items: center; font: bold 11px/12px "Liberation Sans", sans-serif; color: #1f4f9c; }
    .tool { height: 26px; background: linear-gradient(#fcfcfc, #f5f5f5); border: 1px solid #99bbe8; border-bottom-color: #c6c6c6; border-right: 0; display: flex; align-items: center; gap: 8px; padding-left: 5px; }
    .tool button { display: flex; align-items: center; gap: 4px; }
    .view { flex: 1; min-height: 0; display: flex; background: #fff; border-left: 1px solid #99bbe8; border-bottom: 1px solid #dfe9f5; overflow: hidden; }
    .form { flex: 1; margin-top: -8px; padding-right: 10px; }
    section { margin-bottom: 20px; }
    h3 { margin: 0 0 5px 9px; height: 21px; padding-left: 6px; border-bottom: 5px solid #e0e5ee; font: bold 11px/15px Tahoma, "DejaVu Sans Condensed", "DejaVu Sans", sans-serif; color: #15428b; }
    .row { height: 26px; padding-bottom: 4px; display: grid; grid-template-columns: 255px auto 1fr; align-items: center; column-gap: 0; }
    .row.opt { height: 25px; padding-bottom: 0; }
    .row.rad { padding-bottom: 0; align-items: start; }
    .rad > .pick { height: 26px; }
    .rad > .val { line-height: 26px; }
    .rad > .hint { line-height: 22px; }
    .row > .l1 { padding-left: 26px; }
    .row > .l2 { padding-left: 46px; }
    .row .hint { padding-left: 6px; white-space: nowrap; }
    .off { color: #aaa; }
    .pick { display: flex; align-items: center; gap: 6px; white-space: nowrap; }
    .val { color: #1f3fa0; padding-left: 2px; }
    .row > .pick.l1 { padding-left: 24px; }
    .row > .pick.box { padding-left: 26px; }
    input[type="text"] { width: 50px; height: 22px; border: 1px solid #b5b8c8; padding: 4px 3px 0 3px; border-radius: 0; outline: 0; background: linear-gradient(#eef1f2, #fff 6px); }
    input.w80 { width: 80px; }
    input.w127 { width: 127px; }
    input:disabled { border-color: #d3d4dd; }
    input[type="radio"] { appearance: none; width: 13px; height: 13px; border-radius: 50%; border: 1px solid #8e8f8f; background: radial-gradient(circle at 60% 60%, #fff 10%, #c9ccd0 75%); box-shadow: inset 0 0 0 1px #f4f4f4; }
    input[type="radio"]:checked { background: radial-gradient(circle at 50% 45%, #6fd0f4 0 1px, #0d4468 3px, #0a2c48 4px, #d8dde2 5px); }
    input[type="checkbox"] { appearance: none; width: 13px; height: 13px; border: 1px solid #8e8f8f; margin: 0; background: linear-gradient(135deg, #cfd4da, #f6f6f6); box-shadow: inset 0 0 0 1px #f4f4f4; display: grid; place-items: center; }
    .tick { display: grid; }
    .tick > * { grid-area: 1 / 1; }
    .tick svg { place-self: center; pointer-events: none; }
    .combo { display: grid; width: 100px; }
    .combo > * { grid-area: 1 / 1; }
    .combo select { appearance: none; height: 22px; width: 100px; border: 1px solid #b5b8c8; border-radius: 0 2px 0 0; padding: 4px 20px 0 2px; outline: 0; background: linear-gradient(#eef1f2, #fff 6px); }
    .combo .btn { justify-self: end; width: 18px; border: 1px solid #b5b8c8; background: linear-gradient(#fbfbfb, #d3d6dc); display: grid; place-items: center; pointer-events: none; padding-bottom: 3px; }
    .links { padding-left: 26px; line-height: 19px; margin-top: -2px; }
    .links a { color: #1166cc; text-decoration: underline; }
    .sb { width: 17px; background: linear-gradient(90deg, #e6e6e6, #f1f1f1 30%, #f1f1f1); display: flex; flex-direction: column; align-items: center; }
    .sb .a { height: 17px; display: grid; place-items: center; }
    .sb .track { flex: 263; }
    .sb .thumb { flex: 302; width: 15px; border: 1px solid #959595; border-radius: 2px; background: linear-gradient(90deg, #f5f5f5, #e4e4e6 45%, #c6c7ca 55%, #d4d5d8); display: grid; place-items: center; }
    .foot { height: 42px; display: flex; justify-content: flex-end; gap: 6px; padding: 9px 7px; }
    .foot button { width: 75px; height: 21px; border: 1px solid #0f3d75; border-radius: 3px; background: linear-gradient(#fff, #f0f1f4 60%, #d3d5dc 62%, #e3e4ea); }
  `];
  private field(id: string, label: string, value: string, hint = "", lvl = "l2", w = "", off = false) {
    return html`<div class="row"><label class="${lvl} ${off ? "off" : ""}" for=${id}>${label}</label>
      <input id=${id} type="text" class=${w} .value=${value} ?disabled=${off} />${hint ? html`<span class="hint">${hint}</span>` : nothing}</div>`;
  }
  private radio(name: string, label: string, on: boolean, lvl: string) {
    return html`<label class="pick ${lvl}"><input type="radio" name=${name} ?checked=${on} />${label}</label>`;
  }
  render() {
    return html`
      <div class="title">${icEdit}<h2>Edit PPPoE/PPTP</h2><button aria-label="Help">?</button><button aria-label="Close">${icX}</button></div>
      <div class="tool"><button>${icForm}Hide Advanced Settings</button><button>${icNew}Create new Object</button></div>
      <div class="view">
        <div class="form">
          <section><h3>IP Address Assignment</h3>
            <div class="row opt">${this.radio("ip", "Get Automatically", true, "l1")}<span class="val">0.0.0.0</span></div>
            <div class="row opt">${this.radio("ip", "Use Fixed IP Address", false, "l1")}</div>
            ${this.field("addr", "IP Address:", "", "", "l2", "w127", true)}
            ${this.field("gw", "Gateway:", "10.112.112.112", "(Optional)", "l2", "w127")}
            ${this.field("metric", "Metric:", "0", "(0-15)", "l1")}
          </section>
          <section><h3>Interface Parameters</h3>
            ${this.field("eg", "Egress Bandwidth:", "1048576", "Kbps", "l1", "w80")}
            ${this.field("ing", "Ingress Bandwidth:", "1048576", "Kbps", "l1", "w80")}
            ${this.field("mtu", "MTU:", "1492", "Bytes", "l1")}
          </section>
          <section><h3>Connectivity Check</h3>
            <div class="row opt"><label class="pick box"><span class="tick"><input type="checkbox" checked />${pic(9, 9, "0 0 9 9", svg`<path d="M1.500 4 L3.800 7.500 L7.800 .8" stroke="#3a4f8e" stroke-width="2" fill="none"/>`)}</span>Enable Connectivity Check</label></div>
            <div class="row"><label class="l2" for="method">Check Method:</label>
              <div class="combo"><select id="method"><option>icmp</option><option>tcp</option></select><span class="btn">${icChevron}</span></div></div>
            ${this.field("per", "Check Period:", "30", "(5-3600 seconds)")}
            ${this.field("tmo", "Check Timeout:", "5", "(1-10 seconds)")}
            ${this.field("tol", "Check Fail Tolerance:", "5", "(1-10)")}
            <div class="row rad">${this.radio("chk", "Check Default Gateway", true, "l2")}<span class="val">10.112.112.112</span></div>
            <div class="row rad">${this.radio("chk", "Check this address", false, "l2")}<input type="text" class="w127" aria-label="Check this address" disabled /><span class="hint off">(Domain Name or IP Address)</span></div>
          </section>
          <section><h3>Related Setting</h3>
            <div class="links">Configure <a href="#">WAN_TRUNK</a><br />Configure <a href="#">Policy Route</a></div>
          </section>
        </div>
        <div class="sb"><span class="a">${icUp}</span><span class="track"></span><span class="thumb">${icGrip}</span><span class="a">${icDn}</span></div>
      </div>
      <div class="foot"><button>OK</button><button>Cancel</button></div>`;
  }
}

@customElement("task-bar")
class TaskBar extends LitElement {
  static styles = [shared, css`
    :host { display: flex; height: 40px; align-items: stretch; position: relative; overflow: hidden; border-top: 1px solid #17171b; box-shadow: inset 0 1px 0 #77747a; color: #fff; font: 11px/17px "Noto Sans", "Open Sans", sans-serif;
      background:
        radial-gradient(ellipse 120px 26px at 195px 28px, rgba(150,130,110,.9), transparent),
        radial-gradient(ellipse 160px 20px at 60px 42px, rgba(110,92,80,.85), transparent),
        radial-gradient(ellipse 80px 16px at 560px 34px, rgba(150,134,122,.7), transparent),
        radial-gradient(ellipse 130px 16px at 960px 30px, rgba(160,144,126,.85), transparent),
        radial-gradient(ellipse 80px 14px at 1090px 16px, rgba(150,134,120,.7), transparent),
        radial-gradient(ellipse 70px 12px at 1320px 38px, rgba(130,118,112,.6), transparent),
        radial-gradient(ellipse 140px 40px at 1450px 20px, rgba(88,48,40,.5), transparent),
        linear-gradient(90deg, #3a2e31, #3b2f34 25%, #453943 45%, #35292f 60%, #3b2f3b 72%, #1b1718 80%, #3a2524 92%, #1c1415); }
    .start { width: 58px; padding-right: 4px; display: grid; place-items: center; }
    .apps { display: flex; flex: 1; }
    .apps button { width: 62px; display: grid; place-items: center; }
    .apps button > * { grid-area: 1 / 1; }
    .apps button.open::before { content: ""; grid-area: 1 / 1; width: 58px; height: 38px; border: 1px solid rgba(255,255,255,.6); border-radius: 3px; background: linear-gradient(160deg, rgba(255,255,255,.5), rgba(255,255,255,.25) 50%, rgba(255,255,255,.15)); }
    .apps button.live::before { background: linear-gradient(160deg, rgba(255,255,255,.85), rgba(255,255,255,.5)); }
    .apps button.stack::before { width: 56px; box-shadow: 3px 0 0 rgba(200,200,190,.5); }
    .apps button.stack { width: 56px; }
    .apps button.open > * { position: relative; }
    .one-c { width: 29px; height: 29px; border-radius: 50%; background: radial-gradient(circle at 40% 30%, #fffbe0, #fbd652 60%, #d9a31c); color: #dc1a14; display: grid; place-items: center; }
    .one-c b { font: bold 15px/13px "Liberation Sans", sans-serif; border-bottom: 2px solid #dc1a14; }
    .old1c { display: flex; flex-direction: column; align-items: center; }
    .old1c small { font: bold 8px/6px "Liberation Sans", sans-serif; color: #000; }
    .tray { display: flex; align-items: center; color: #fff; }
    .lang { margin-right: 12px; margin-bottom: 4px; }
    .tray i { width: 24px; display: grid; place-items: center; }
    .clock { width: 80px; text-align: center; }
    .desk { width: 14px; border: 1px solid #77767a; background: linear-gradient(135deg, rgba(255,255,255,.35), rgba(255,255,255,.05)); }
  `];
  render() {
    const apps: [Pic, string, string][] = [[tbPhone, "Phone", ""], [tbTeam, "TeamViewer", ""], [tbOld1c, "1С V7", ""], [tb1c, "1C", ""], [tbScan, "Scan", ""], [tbOutlook, "Outlook", "open"], [tbMu, "uTorrent", ""], [tbFloppy, "Save", ""], [tbWord, "Word", ""], [tbExcel, "Excel", ""], [tbOpera, "Opera", ""], [tbFox, "Firefox", "open live"], [tbSearch, "Search", "open"], [tbYandex, "Yandex", ""], [tb1c, "1C", "open stack"]];
    return html`<button class="start" aria-label="Пуск">${tbStart}</button>
      <div class="apps">${apps.map(([ic, t, c]) => html`<button class=${c} aria-label=${t}>${ic}</button>`)}</div>
      <div class="tray"><span class="lang">EN</span>${trIcons.map(i => html`<i>${i}</i>`)}<div class="clock">9:19<br />02.03.2016</div></div>
      <button class="desk" aria-label="Рабочий стол"></button>`;
  }
}

@customElement("app-root")
class AppRoot extends LitElement {
  static styles = [shared, css`
    :host { display: flex; flex-direction: column; height: 100vh; position: relative; overflow: hidden; font: 11px/15px "Noto Sans", "Open Sans", sans-serif; }
    .page { flex: 1; min-height: 0; position: relative; }
    edit-dialog { position: absolute; left: 205px; right: 344px; top: 4px; bottom: 68px; }
    .status { position: absolute; left: 0; bottom: 0; height: 20px; padding: 0 10px 0 4px; border: 1px solid #c8c8c8; border-width: 1px 1px 0 0; background: linear-gradient(#fff, #e2e2e2); color: #2b2b2b; line-height: 19px; white-space: nowrap; }
    .toast { position: absolute; right: 210px; bottom: 40px; width: 308px; height: 69px; display: flex; gap: 5px; padding: 8px 11px 0 11px; border: 1px solid #8b8c92; border-radius: 3px; color: #34343a;
      background: linear-gradient(rgba(222,223,226,.97), rgba(197,198,208,.97)); box-shadow: 2px 3px 5px rgba(0,0,0,.4); }
    .toast .cl { padding-top: 6px; }
    .toast h4 { margin: 0; font: 15px/20px "Noto Sans", "Open Sans", sans-serif; color: #3355a5; white-space: nowrap; }
    .toast p { margin: 1px 0 0; line-height: 15px; white-space: nowrap; }
    .toast .ctl { position: absolute; right: 13px; top: 9px; display: flex; gap: 9px; }
    .toast .tail { position: absolute; left: 272px; top: 67px; }
  `];
  render() {
    return html`<browser-chrome></browser-chrome>
      <div class="page"><router-page></router-page><edit-dialog></edit-dialog><div class="status">https://192.168.1.251/ext-js/web-pages/index/index.html#</div></div>
      <task-bar></task-bar>
      <div class="toast"><span class="cl">${icCloud}</span><div><h4>Снимок экрана сохранен</h4><p>Снимок экрана добавлен в ваше хранилище<br />OneDrive.</p></div>
        <div class="ctl"><button aria-label="Настройки">${icWrench}</button><button aria-label="Закрыть">${icXg}</button></div>
        <svg class="tail" width="20" height="19" viewBox="0 0 20 19"><path d="M0 0 H19 V19Z" fill="#b9bac4"/></svg></div>`;
  }
}
